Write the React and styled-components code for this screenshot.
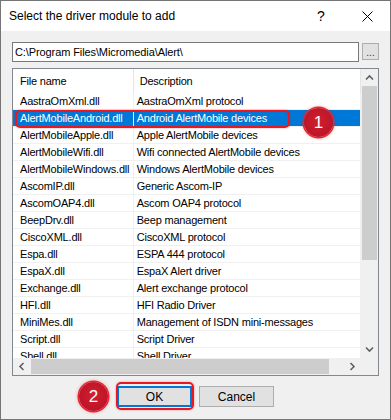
import React from 'react'
import styled, { createGlobalStyle } from 'styled-components'

const rows = [
  ['AastraOmXml.dll', 'AastraOmXml protocol'],
  ['AlertMobileAndroid.dll', 'Android AlertMobile devices'],
  ['AlertMobileApple.dll', 'Apple AlertMobile devices'],
  ['AlertMobileWifi.dll', 'Wifi connected AlertMobile devices'],
  ['AlertMobileWindows.dll', 'Windows AlertMobile devices'],
  ['AscomIP.dll', 'Generic Ascom-IP'],
  ['AscomOAP4.dll', 'Ascom OAP4 protocol'],
  ['BeepDrv.dll', 'Beep management'],
  ['CiscoXML.dll', 'CiscoXML protocol'],
  ['Espa.dll', 'ESPA 444 protocol'],
  ['EspaX.dll', 'EspaX Alert driver'],
  ['Exchange.dll', 'Alert exchange protocol'],
  ['HFI.dll', 'HFI Radio Driver'],
  ['MiniMes.dll', 'Management of ISDN mini-messages'],
  ['Script.dll', 'Script Driver'],
  ['Shell.dll', 'Shell Driver'],
]

function Chevron({ dir }) {
  const rot = { up: 0, right: 90, down: 180, left: 270 }[dir]
  return (
    <svg width="9" height="9" viewBox="0 0 9 9" style={{ transform: `rotate(${rot}deg)` }}>
      <path d="M1 6.5 L4.5 3 L8 6.5" fill="none" stroke="#606060" strokeWidth="1.6" />
    </svg>
  )
}

function App() {
  return (
    <>
      <GlobalStyle />
      <Window>
        <TitleBar>
          <Title>Select the driver module to add</Title>
          <TitleButton>?</TitleButton>
          <TitleButton>
            <svg width="11" height="11" viewBox="0 0 11 11">
              <path d="M0.5 0.5 L10.5 10.5 M10.5 0.5 L0.5 10.5" stroke="#000" strokeWidth="1" />
            </svg>
          </TitleButton>
        </TitleBar>
        <Body>
          <PathRow>
            <PathInput>C:\Program Files\Micromedia\Alert\</PathInput>
            <BrowseButton>...</BrowseButton>
          </PathRow>
          <ListView>
            <ListContent>
              <HeaderRow>
                <HeaderCell $first>File name</HeaderCell>
                <HeaderCell>Description</HeaderCell>
              </HeaderRow>
              {rows.map(([file, desc], i) => (
                <Row key={file} $selected={i === 1}>
                  <Cell $first>{file}</Cell>
                  <Cell>{desc}</Cell>
                </Row>
              ))}
            </ListContent>
            <VScroll>
              <ArrowBox><Chevron dir="up" /></ArrowBox>
              <VThumb />
              <Track />
              <ArrowBox><Chevron dir="down" /></ArrowBox>
            </VScroll>
            <HScroll>
              <ArrowBox><Chevron dir="left" /></ArrowBox>
              <HThumb />
              <Track />
              <ArrowBox><Chevron dir="right" /></ArrowBox>
            </HScroll>
            <Corner />
          </ListView>
          <ButtonRow>
            <DialogButton $default>OK</DialogButton>
            <DialogButton>Cancel</DialogButton>
          </ButtonRow>
        </Body>

        <Outline style={{ left: 14, top: 109, width: 275, height: 18 }} />
        <Badge style={{ left: 303, top: 107 }}>1</Badge>
        <Outline style={{ left: 115, top: 381, width: 78, height: 28 }} />
        <Badge style={{ left: 78, top: 381 }}>2</Badge>
      </Window>
    </>
  )
}

export default App

const GlobalStyle = createGlobalStyle`
  body {
    margin: 0;
    font-family: "Liberation Sans", Arial, sans-serif;
  }
`

const Window = styled.div`
  position: relative;
  width: 391px;
  height: 420px;
  box-sizing: border-box;
  border: 1px solid #757575;
  background: #f0f0f0;
  display: flex;
  flex-direction: column;
  overflow: hidden;
`

const TitleBar = styled.div`
  height: 30px;
  background: #fff;
  display: flex;
  align-items: center;
  flex-shrink: 0;
`

const Title = styled.div`
  flex: 1;
  padding-left: 8px;
  font-size: 12px;
  color: #000;
`

const TitleButton = styled.div`
  width: 46px;
  height: 30px;
  display: flex;
  align-items: center;
  justify-content: center;
  font-size: 14px;
  color: #000;
`

const Body = styled.div`
  padding: 11px 11px 0 11px;
  display: flex;
  flex-direction: column;
`

const PathRow = styled.div`
  display: flex;
  align-items: flex-start;
  gap: 3px;
`

const PathInput = styled.div`
  width: 347px;
  height: 20px;
  box-sizing: border-box;
  border: 1px solid #7a7a7a;
  background: #fff;
  font-size: 11px;
  letter-spacing: -0.1px;
  line-height: 18px;
  padding-left: 2px;
  color: #000;
`

const BrowseButton = styled.div`
  width: 17px;
  height: 17px;
  margin-top: 1px;
  box-sizing: border-box;
  border: 1px solid #adadad;
  background: #e1e1e1;
  font-size: 10px;
  color: #602060;
  text-align: center;
  line-height: 17px;
`

const ListView = styled.div`
  margin-top: 6px;
  width: 367px;
  height: 308px;
  box-sizing: border-box;
  border: 1px solid #828790;
  background: #fff;
  display: grid;
  grid-template-columns: 1fr 17px;
  grid-template-rows: 1fr 17px;
`

const ListContent = styled.div`
  overflow: hidden;
  font-size: 11px;
  letter-spacing: -0.2px;
  color: #000;
`

const HeaderRow = styled.div`
  display: flex;
  height: 24px;
  align-items: stretch;
`

const HeaderCell = styled.div`
  box-sizing: border-box;
  width: ${p => (p.$first ? '121px' : '228px')};
  border-right: 1px solid #e5e5e5;
  padding-left: ${p => (p.$first ? '7px' : '6px')};
  display: flex;
  align-items: center;
`

const Row = styled.div`
  display: flex;
  height: 17px;
  box-sizing: border-box;
  border-bottom: 1px solid #f0f0f0;
  background: ${p => (p.$selected ? '#0078d7' : '#fff')};
  color: ${p => (p.$selected ? '#fff' : '#000')};
`

const Cell = styled.div`
  box-sizing: border-box;
  width: ${p => (p.$first ? '121px' : '228px')};
  border-right: 1px solid ${p => (p.$first ? '#f0f0f0' : '#f0f0f0')};
  padding-left: ${p => (p.$first ? '7px' : '3px')};
  line-height: 16px;
  white-space: nowrap;
  overflow: hidden;
`

const VScroll = styled.div`
  background: #f0f0f0;
  display: flex;
  flex-direction: column;
`

const HScroll = styled.div`
  background: #f0f0f0;
  display: flex;
`

const ArrowBox = styled.div`
  width: 17px;
  height: 17px;
  flex-shrink: 0;
  display: flex;
  align-items: center;
  justify-content: center;
`

const VThumb = styled.div`
  height: 174px;
  margin: 0 1px;
  background: #cdcdcd;
`

const HThumb = styled.div`
  width: 298px;
  margin: 1px 0 1px 1px;
  background: #cdcdcd;
`

const Track = styled.div`
  flex: 1;
`

const Corner = styled.div`
  background: #f0f0f0;
`

const ButtonRow = styled.div`
  margin-top: 10px;
  display: flex;
  justify-content: center;
  gap: 7px;
`

const DialogButton = styled.div`
  width: 75px;
  height: 21px;
  box-sizing: border-box;
  border: ${p => (p.$default ? '2px solid #0078d7' : '1px solid #adadad')};
  background: #e1e1e1;
  font-size: 12px;
  color: #000;
  display: flex;
  align-items: center;
  justify-content: center;
`

const Outline = styled.div`
  position: absolute;
  box-sizing: border-box;
  border: 2px solid #e81820;
  border-radius: 5px;
  box-shadow: 0 0 2px rgba(230, 20, 30, 0.5);
`

const Badge = styled.div`
  position: absolute;
  width: 29px;
  height: 29px;
  border-radius: 50%;
  box-sizing: border-box;
  background: radial-gradient(circle at 50% 45%, #d11f2c 0%, #c0162a 60%, #b01228 100%);
  box-shadow: 0 0 0 1.5px #e8262d, 0 0 4px rgba(220, 20, 30, 0.7);
  color: #fff;
  font-size: 17px;
  display: flex;
  align-items: center;
  justify-content: center;
`
